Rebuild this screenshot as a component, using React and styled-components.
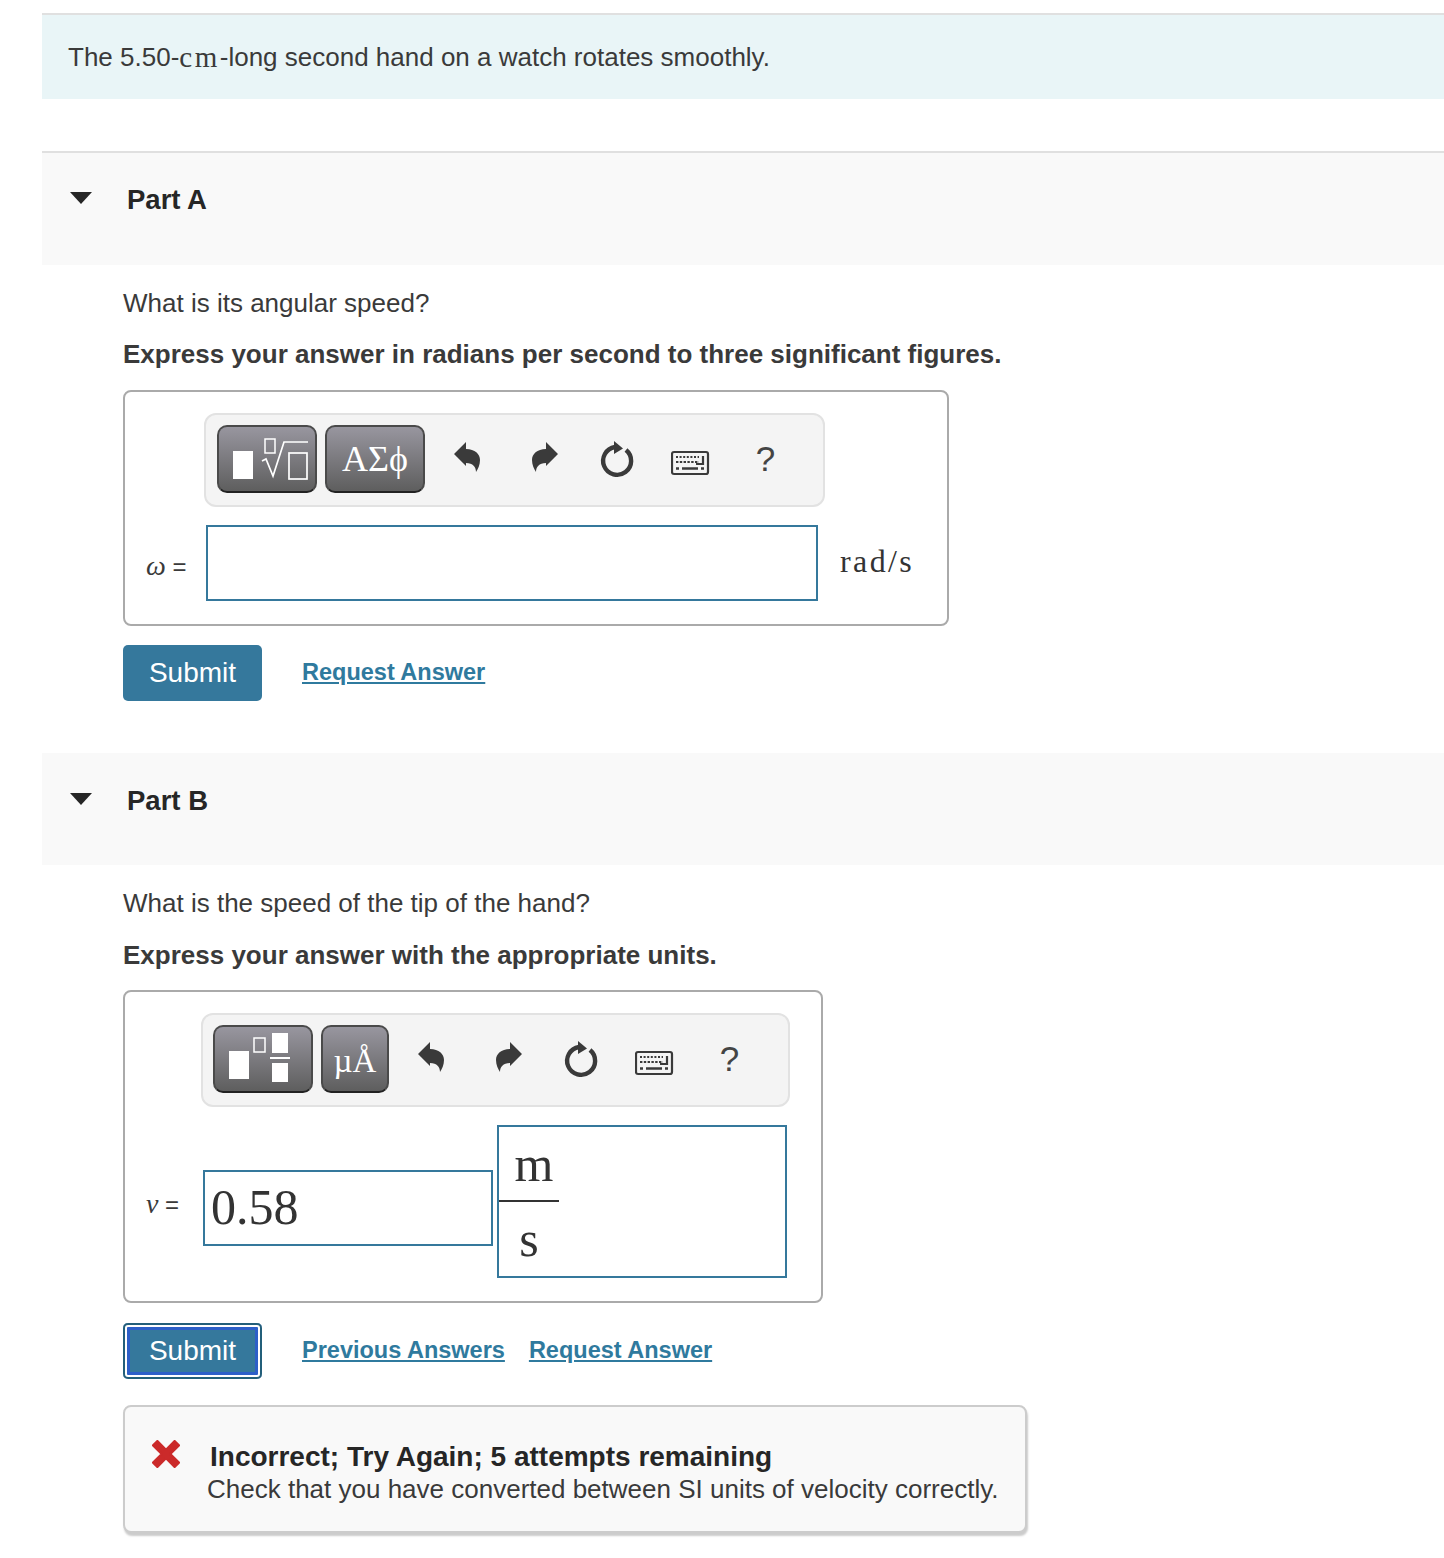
import React from "react";
import styled, { createGlobalStyle } from "styled-components";

const GlobalStyle = createGlobalStyle`
    html, body {
        margin:0;
        padding:0;
        background:#fff;
    }
    body {
        font-family:"Liberation Sans", Arial, sans-serif;
        color:#333;
    }
`;

const UndoIcon = ({ flip }) => (
    <ToolIcon viewBox="0 0 40 40" $flip={flip}>
        <path d="M8 15 L20 3 V10 C29 10 34 15 34 21 C34 26 32 30 30 33 C30 28 27 24 20 24 V27 Z" fill="#3a3a3a" />
    </ToolIcon>
);

const ResetIcon = () => (
    <ToolIcon viewBox="0 0 40 40">
        <path d="M19 8 A14 14 0 1 0 30 11" fill="none" stroke="#3a3a3a" strokeWidth="4.4" />
        <path d="M18 2 L27 9.5 L18 15 Z" fill="#3a3a3a" />
    </ToolIcon>
);

const KeyboardIcon = () => (
    <ToolIcon viewBox="0 0 40 40">
        <rect x="1" y="13" width="36" height="22" rx="2" fill="none" stroke="#3a3a3a" strokeWidth="2.2" />
        <path d="M5 18 H28" stroke="#3a3a3a" strokeWidth="2.2" strokeDasharray="2 1.6" />
        <path d="M5 23 H28" stroke="#3a3a3a" strokeWidth="2.2" strokeDasharray="2.4 1.4" />
        <path d="M32 17 V25 H25" fill="none" stroke="#3a3a3a" strokeWidth="2.2" />
        <path d="M5 29.5 H8 M11 29.5 H27 M30 29.5 H33" stroke="#3a3a3a" strokeWidth="2.4" />
    </ToolIcon>
);

const RootTemplate = () => (
    <svg width="96" height="64" viewBox="0 0 96 64">
        <rect x="14" y="24" width="20" height="28" fill="#fff" />
        <rect x="46" y="12" width="10" height="14" fill="none" stroke="#fff" strokeWidth="1.5" />
        <path d="M43 34 L47 32 L54 49 L65 15 H89" fill="none" stroke="#fff" strokeWidth="1.7" />
        <rect x="70" y="26" width="18" height="26" fill="none" stroke="#fff" strokeWidth="1.7" />
    </svg>
);

const FractionTemplate = () => (
    <svg width="96" height="64" viewBox="0 0 96 64">
        <rect x="14" y="24" width="20" height="28" fill="#fff" />
        <rect x="39" y="11" width="11" height="14" fill="none" stroke="#fff" strokeWidth="1.5" />
        <rect x="57" y="6" width="16" height="20" fill="#fff" />
        <rect x="55" y="30" width="20" height="2" fill="#fff" />
        <rect x="57" y="36" width="16" height="19" fill="#fff" />
    </svg>
);

const Toolbar = ({ wide, first, second }) => (
    <ToolbarBar $wide={wide}>
        <TemplateButton>{first}</TemplateButton>
        <TemplateButton $narrow={!wide}>{second}</TemplateButton>
        <IconRow>
            <IconSlot><UndoIcon /></IconSlot>
            <IconSlot><UndoIcon flip /></IconSlot>
            <IconSlot><ResetIcon /></IconSlot>
            <IconSlot><KeyboardIcon /></IconSlot>
            <IconSlot><HelpMark>?</HelpMark></IconSlot>
        </IconRow>
    </ToolbarBar>
);

const PartHeading = ({ first, children }) => (
    <PartHeader $first={first}>
        <Caret />
        <PartTitle>{children}</PartTitle>
    </PartHeader>
);

const App = () => {
    return (
        <>
            <GlobalStyle />
            <Page>
                <Statement>The 5.50-<MathText>cm</MathText>-long second hand on a watch rotates smoothly.</Statement>

                <PartHeading first>Part A</PartHeading>
                <PartBody>
                    <Question>What is its angular speed?</Question>
                    <Instruction>Express your answer in radians per second to three significant figures.</Instruction>
                    <AnswerBox $width={826}>
                        <Toolbar wide first={<RootTemplate />} second={<GreekLabel>ΑΣϕ</GreekLabel>} />
                        <AnswerRow>
                            <VarLabel><VarSymbol>ω</VarSymbol> =</VarLabel>
                            <ValueInput $width={612} readOnly />
                            <UnitText>rad/s</UnitText>
                        </AnswerRow>
                    </AnswerBox>
                    <ActionRow>
                        <SubmitButton>Submit</SubmitButton>
                        <LinkGroup>
                            <ActionLink href="#">Request Answer</ActionLink>
                        </LinkGroup>
                    </ActionRow>
                </PartBody>

                <PartHeading>Part B</PartHeading>
                <PartBody>
                    <Question>What is the speed of the tip of the hand?</Question>
                    <Instruction $low>Express your answer with the appropriate units.</Instruction>
                    <AnswerBox $width={700}>
                        <Toolbar first={<FractionTemplate />} second={<GreekLabel $small>µÅ</GreekLabel>} />
                        <AnswerRow $tall>
                            <VarLabel $short><VarSymbol>v</VarSymbol> =</VarLabel>
                            <ValueInput $width={290} $offset defaultValue="0.58" readOnly />
                            <UnitFraction>
                                <FractionTop>m</FractionTop>
                                <FractionBottom>s</FractionBottom>
                            </UnitFraction>
                        </AnswerRow>
                    </AnswerBox>
                    <ActionRow $low>
                        <SubmitButton $focused>Submit</SubmitButton>
                        <LinkGroup>
                            <ActionLink href="#">Previous Answers</ActionLink>
                            <ActionLink href="#">Request Answer</ActionLink>
                        </LinkGroup>
                    </ActionRow>
                    <Feedback>
                        <FeedbackHead>
                            <CrossIcon viewBox="0 0 26 26">
                                <polygon points="5,1 13,9 21,1 25,5 17,13 25,21 21,25 13,17 5,25 1,21 9,13 1,5" fill="#cb2a2a" stroke="#cb2a2a" strokeWidth="2" strokeLinejoin="round" />
                            </CrossIcon>
                            <FeedbackTitle>Incorrect; Try Again; 5 attempts remaining</FeedbackTitle>
                        </FeedbackHead>
                        <FeedbackText>Check that you have converted between SI units of velocity correctly.</FeedbackText>
                    </Feedback>
                </PartBody>
            </Page>
        </>
    )
}

const Page = styled.div`
    width:1402px;
    height:1545px;
    padding:13px 0 0 42px;
    overflow:hidden;
`

const Statement = styled.div`
    height:84px;
    border-top:2px solid #e0e0e0;
    background-color:#e9f5f7;
    padding-left:26px;
    display:flex;
    align-items:center;
    white-space:pre-wrap;
    font-size:26px;
    color:#3a3a3a;
`

const MathText = styled.span`
    font-family:"Liberation Serif", serif;
    font-size:29px;
    letter-spacing:2.5px;
`

const PartHeader = styled.div`
    height:${({ $first }) => ($first ? "114px" : "112px")};
    margin-top:${({ $first }) => ($first ? "52px" : "0")};
    border-top:${({ $first }) => ($first ? "2px solid #e0e0e0" : "none")};
    background-color:#f9f9f9;
    display:flex;
    align-items:flex-start;
    padding:${({ $first }) => ($first ? "29px" : "30px")} 0 0 28px;
    box-sizing:border-box;
`

const Caret = styled.div`
    width:0;
    height:0;
    margin-top:10px;
    border-left:11px solid transparent;
    border-right:11px solid transparent;
    border-top:12px solid #262626;
`

const PartTitle = styled.div`
    margin-left:35px;
    font-size:27.5px;
    line-height:36px;
    font-weight:bold;
    color:#262626;
`

const PartBody = styled.div`
    padding:20px 0 52px 81px;
`

const Question = styled.div`
    font-size:26px;
    line-height:36px;
    color:#3a3a3a;
`

const Instruction = styled.div`
    margin-top:${({ $low }) => ($low ? "16px" : "15px")};
    margin-bottom:${({ $low }) => ($low ? "17px" : "18px")};
    font-size:26px;
    line-height:36px;
    font-weight:bold;
    color:#3a3a3a;
`

const AnswerBox = styled.div`
    box-sizing:border-box;
    width:${({ $width }) => $width}px;
    border:2px solid #aaa;
    border-radius:8px;
    padding:21px 0 23px;
`

const ToolbarBar = styled.div`
    box-sizing:border-box;
    width:${({ $wide }) => ($wide ? "621px" : "589px")};
    height:94px;
    margin-left:${({ $wide }) => ($wide ? "79px" : "76px")};
    padding:0 0 2px ${({ $wide }) => ($wide ? "11px" : "10px")};
    border:2px solid #e2e2e2;
    border-radius:12px;
    background-color:#f4f4f4;
    display:flex;
    align-items:center;
    gap:8px;
`

const TemplateButton = styled.div`
    box-sizing:border-box;
    width:${({ $narrow }) => ($narrow ? "68px" : "100px")};
    height:68px;
    border:2px solid #4a4a4a;
    border-bottom-color:#222;
    border-radius:10px;
    background:linear-gradient(#98969f, #5e5e5e);
    display:flex;
    align-items:center;
    justify-content:center;
    overflow:hidden;
`

const GreekLabel = styled.span`
    font-family:"Liberation Serif", serif;
    font-size:${({ $small }) => ($small ? "33px" : "36px")};
    margin-top:${({ $small }) => ($small ? "5px" : "0")};
    color:#fff;
    white-space:nowrap;
`

const IconRow = styled.div`
    display:flex;
    align-items:center;
    margin-left:-5px;
`

const IconSlot = styled.div`
    width:75px;
    display:flex;
    justify-content:center;
`

const ToolIcon = styled.svg`
    width:40px;
    height:40px;
    transform:${({ $flip }) => ($flip ? "scaleX(-1) translateX(-5px)" : "none")};
`

const HelpMark = styled.span`
    font-size:35px;
    line-height:40px;
    color:#444;
`

const AnswerRow = styled.div`
    margin-top:18px;
    height:${({ $tall }) => ($tall ? "153px" : "76px")};
    padding-left:21px;
    display:flex;
    align-items:center;
`

const VarLabel = styled.div`
    box-sizing:border-box;
    width:${({ $short }) => ($short ? "57px" : "60px")};
    padding-top:5px;
    flex-shrink:0;
    font-size:24px;
    color:#3a3a3a;
    white-space:pre;
`

const VarSymbol = styled.span`
    font-family:"Liberation Serif", serif;
    font-style:italic;
    font-size:28px;
`

const ValueInput = styled.input`
    box-sizing:border-box;
    width:${({ $width }) => $width}px;
    height:76px;
    margin-top:${({ $offset }) => ($offset ? "13px" : "0")};
    padding:0 6px 2px;
    border:2px solid #35789c;
    border-radius:0;
    outline:none;
    background:#fff;
    font-family:"Liberation Serif", serif;
    font-size:50px;
    color:#333;
`

const UnitText = styled.div`
    margin-left:22px;
    padding-bottom:4px;
    font-family:"Liberation Serif", serif;
    font-size:32px;
    letter-spacing:2.4px;
    color:#333;
`

const UnitFraction = styled.div`
    box-sizing:border-box;
    width:290px;
    height:153px;
    margin-left:4px;
    border:2px solid #35789c;
    font-family:"Liberation Serif", serif;
    font-size:50px;
    color:#333;
`

const FractionTop = styled.div`
    box-sizing:border-box;
    width:60px;
    height:75px;
    padding-left:10px;
    border-bottom:2px solid #333;
    text-align:center;
    line-height:74px;
`

const FractionBottom = styled.div`
    width:60px;
    text-align:center;
    line-height:74px;
`

const ActionRow = styled.div`
    margin-top:${({ $low }) => ($low ? "20px" : "19px")};
    display:flex;
    align-items:center;
`

const SubmitButton = styled.button`
    box-sizing:border-box;
    width:139px;
    height:56px;
    padding:0;
    border:none;
    border-radius:5px;
    background-color:#35789c;
    color:#fff;
    font-family:"Liberation Sans", Arial, sans-serif;
    font-size:28px;
    box-shadow:${({ $focused }) => ($focused ? "inset 0 0 0 2px #235f7a, inset 0 0 0 4px #fff, inset 0 0 0 7px #2d5fc8" : "none")};
`

const LinkGroup = styled.div`
    display:flex;
    gap:24px;
    margin-left:40px;
    margin-top:-2px;
`

const ActionLink = styled.a`
    font-size:23.5px;
    font-weight:bold;
    color:#2f7a9e;
    text-decoration:underline;
`

const Feedback = styled.div`
    box-sizing:border-box;
    width:904px;
    height:128px;
    margin-top:26px;
    padding:33px 0 0 27px;
    border:2px solid #ccc;
    border-radius:8px;
    background-color:#f9f9f9;
    box-shadow:1px 3px 2px #ccc;
`

const FeedbackHead = styled.div`
    display:flex;
    align-items:center;
    gap:30px;
    margin-bottom:-2px;
`

const CrossIcon = styled.svg`
    width:28px;
    height:28px;
    margin-top:-6px;
    flex-shrink:0;
`

const FeedbackTitle = styled.div`
    font-size:28px;
    line-height:34px;
    font-weight:bold;
    color:#262626;
`

const FeedbackText = styled.div`
    margin-left:55px;
    font-size:26px;
    line-height:34px;
    color:#3a3a3a;
`

export default App;
